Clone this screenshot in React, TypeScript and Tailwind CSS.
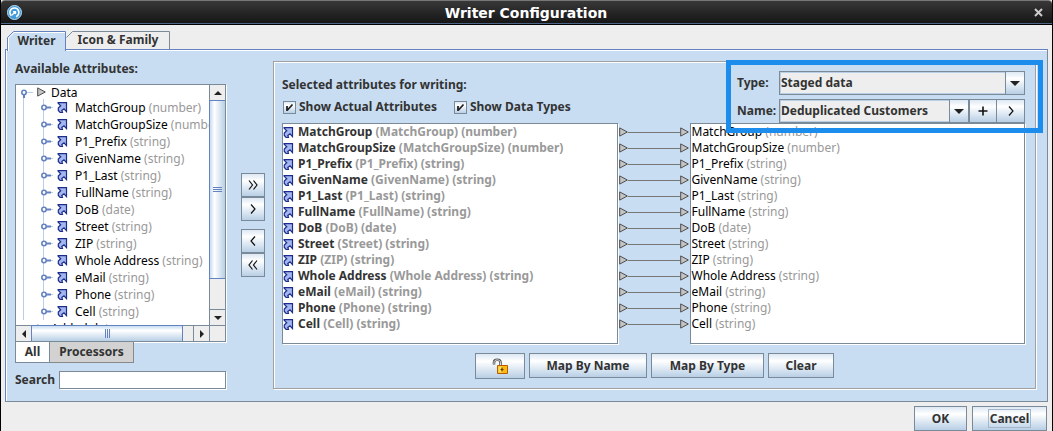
import React from 'react';

const attributes = [
  { name: 'MatchGroup', type: 'number' },
  { name: 'MatchGroupSize', type: 'number' },
  { name: 'P1_Prefix', type: 'string' },
  { name: 'GivenName', type: 'string' },
  { name: 'P1_Last', type: 'string' },
  { name: 'FullName', type: 'string' },
  { name: 'DoB', type: 'date' },
  { name: 'Street', type: 'string' },
  { name: 'ZIP', type: 'string' },
  { name: 'Whole Address', type: 'string' },
  { name: 'eMail', type: 'string' },
  { name: 'Phone', type: 'string' },
  { name: 'Cell', type: 'string' },
];

const metal = 'border border-[#7a8a99] bg-linear-to-b from-[#dde8f3] via-white via-30% to-[#b8cfe5]';

const AttributeIcon = () => (
  <svg width="11" height="11" viewBox="0 0 11 11" className="shrink-0">
    <path d="M1 .5h8.500v8.500L7 6.800 4.800 8.500l.7 2H3.200L1.300 8.500V6l2.400-2.200z" fill="#a3b6f0" />
    <path
      d="M.5 .6H9.500v9L7 6.800 4.800 8.500l.7 2H3.200L1.300 8.500V6l2.400-2.200L.8 .8"
      fill="none"
      stroke="#1c2c8c"
      strokeWidth="1.200"
    />
  </svg>
);

const NodeArrow = () => (
  <svg width="9" height="10" viewBox="0 0 9 10" className="shrink-0">
    <path d="M.7 .9v8.200L8.300 5z" fill="#c4c4c4" stroke="#4c4c4c" />
  </svg>
);

const Chevron = ({ double = false, left = false }: { double?: boolean; left?: boolean }) => (
  <svg width="12" height="12" viewBox="0 0 12 12" className={left ? 'rotate-180' : ''}>
    <path
      d={double ? 'M2 1.500 5.500 6 2 10.500M6.500 1.500 10 6 6.500 10.500' : 'M4 1.500 8 6 4 10.500'}
      fill="none"
      stroke="#111"
      strokeWidth="1.200"
    />
  </svg>
);

const Triangle = ({ d }: { d: string }) => (
  <svg width="10" height="10" viewBox="0 0 10 10">
    <path d={d} fill="#222" />
  </svg>
);

const AppLogo = () => (
  <svg width="15" height="15" viewBox="0 0 15 15">
    <circle cx="7.500" cy="7.500" r="7" fill="#3f9bdc" stroke="#b9dcf4" />
    <path d="M4.300 10.800A4.500 4.500 0 1 1 9 11.700" fill="none" stroke="#fff" strokeWidth="1.600" />
    <path d="M4.800 10.200 8 7M6 6.600h2.500V9" fill="none" stroke="#fff" strokeWidth="1.300" />
  </svg>
);

const LockIcon = () => (
  <svg width="17" height="17" viewBox="0 0 17 17">
    <path d="M2 6.500V4.500C2 .8 8.500 .8 8.500 4.500V7" fill="none" stroke="#555" strokeWidth="2.600" />
    <path d="M2 6V4.500C2 1 8.500 1 8.500 4.500V7" fill="none" stroke="#ddd" strokeWidth="1" />
    <path d="M5.500 7.500h10v8h-10z" fill="#fdb913" stroke="#b85c00" />
    <path d="M6.500 8.500h4v6h-4z" fill="#ffe05a" />
    <path d="M10 9.500v4M8.500 11.500h3" stroke="#6b3500" strokeWidth="1.200" />
  </svg>
);

const TitleBar = () => (
  <header className="h-[25px] flex items-center pl-[6px] pr-[6px] border-t border-[#777] border-b border-b-black bg-linear-to-b from-[#383838] to-[#151515] shadow-[inset_0_-1px_0_#4d6687] rounded-t-sm">
    <AppLogo />
    <h1 className="flex-1 text-center text-white text-[14px] leading-4 font-bold font-[family-name:'DejaVu_Sans',sans-serif]">
      Writer Configuration
    </h1>
    <button aria-label="Close" className="size-4 flex items-center justify-center">
      <svg width="9" height="9" viewBox="0 0 9 9">
        <path d="M1 1l7 7M8 1 1 8" stroke="#ccc" strokeWidth="2" />
      </svg>
    </button>
  </header>
);

const WindowTabs = () => (
  <nav className="flex pl-[2px] h-[19px] relative z-10">
    <button className="w-[59px] h-[19px] text-center relative">
      <svg className="absolute left-0 top-0" width="59" height="20" viewBox="0 0 59 20">
        <path d="M.5 20V6.500l6-6h52V20" fill="#c8ddf2" stroke="#6382bf" />
        <path d="M1.500 20V7L7 1.500h51" fill="none" stroke="#fff" />
      </svg>
      <span className="relative">Writer</span>
    </button>
    <button className="w-[104px] h-[18px] text-center relative">
      <svg className="absolute left-0 top-0" width="104" height="18" viewBox="0 0 104 18">
        <path d="M.5 6.500l6-6h97V18" fill="none" stroke="#7a8a99" />
      </svg>
      <span className="relative">Icon &amp; Family</span>
    </button>
  </nav>
);

const AttributeTree = () => (
  <div className="flex-1 basis-0 min-h-0 flex flex-col border border-[#7a8a99] bg-white shadow-[1px_1px_0_#fff]">
    <div className="flex-1 min-h-0 flex">
      <ul className="flex-1 min-w-0 overflow-hidden font-normal text-black whitespace-nowrap">
        <li className="flex items-center h-[14px]">
          <svg width="21" height="14" viewBox="0 0 21 14" className="shrink-0">
            <path d="M7.500 10v4" stroke="#b8cfe5" />
            <path d="M8 7.500h9" stroke="#b8cfe5" />
            <path d="M8 9v4" stroke="#6382bf" strokeWidth="2" />
            <circle cx="8" cy="7.500" r="2.200" fill="#fff" stroke="#6382bf" strokeWidth="1.600" />
          </svg>
          <NodeArrow />
          <span className="pl-[5px] pt-[2px]">Data</span>
        </li>
        {attributes.map((a) => (
          <li key={a.name} className="flex items-center h-[17px]">
            <svg width="41" height="17" viewBox="0 0 41 17" className="shrink-0">
              <path d="M7.500 0v17M27.500 0v17M30 8.500h7" stroke="#b8cfe5" />
              <path d="M30 8.500h5" stroke="#6382bf" strokeWidth="2" />
              <circle cx="28" cy="8.500" r="2.200" fill="#fff" stroke="#6382bf" strokeWidth="1.600" />
            </svg>
            <AttributeIcon />
            <span className="pl-[7px]">
              {a.name} <span className="text-[#999]">({a.type})</span>
            </span>
          </li>
        ))}
        <li className="flex items-center h-[18px] pl-[21px]">
          <NodeArrow />
          <span className="pl-[5px]">Added data</span>
        </li>
      </ul>
      <div className="w-4 flex flex-col border-l border-[#7a8a99] bg-[#eee]">
        <button aria-label="Scroll up" className="h-[15px] flex items-center justify-center">
          <Triangle d="M1 7h8L5 3z" />
        </button>
        <div className="h-[179px] flex flex-col items-center justify-center gap-px border-y border-l border-[#6382bf] -ml-px bg-linear-to-r from-[#c8ddf2] via-white via-30% to-[#b8cfe5]">
          <i className="w-[9px] h-px bg-[#6382bf]" />
          <i className="w-[9px] h-px bg-[#6382bf]" />
          <i className="w-[9px] h-px bg-[#6382bf]" />
        </div>
        <div className="flex-1" />
        <button aria-label="Scroll down" className="h-4 flex items-center justify-center border-t border-[#7a8a99]">
          <Triangle d="M1 3h8L5 7z" />
        </button>
      </div>
    </div>
    <div className="h-4 flex border-t border-[#7a8a99] bg-[#eee]">
      <button aria-label="Scroll left" className="w-[15px] flex items-center justify-center">
        <Triangle d="M7 1v8L3 5z" />
      </button>
      <div className="w-[152px] flex items-center justify-center gap-px border-x border-t border-[#6382bf] -mt-px bg-linear-to-b from-[#c8ddf2] via-white via-30% to-[#b8cfe5]">
        <i className="h-[9px] w-px bg-[#6382bf]" />
        <i className="h-[9px] w-px bg-[#6382bf]" />
        <i className="h-[9px] w-px bg-[#6382bf]" />
      </div>
      <div className="flex-1" />
      <button aria-label="Scroll right" className="w-4 flex items-center justify-center border-l border-[#7a8a99]">
        <Triangle d="M3 1v8l4-4z" />
      </button>
      <div className="w-4 border-l border-[#7a8a99]" />
    </div>
  </div>
);

const Available = () => (
  <section className="w-[211px] shrink-0 flex flex-col">
    <h2 className="pt-[11px] pb-[7px]">Available Attributes:</h2>
    <AttributeTree />
    <div className="flex">
      <button className="w-[35px] h-[21px] bg-white border border-t-0 border-[#7a8a99]">All</button>
      <button className="w-[84px] h-[21px] bg-[#d2d2d2] border border-t-0 border-l-0 border-[#888]">Processors</button>
    </div>
    <div className="flex items-center gap-1 pt-2">
      <label htmlFor="search">Search</label>
      <input
        id="search"
        className="flex-1 min-w-0 h-[18px] px-1 bg-white border border-[#7a8a99] shadow-[1px_1px_0_#fff] outline-none font-normal"
      />
    </div>
  </section>
);

const MoveButtons = () => (
  <div className="w-6 shrink-0 flex flex-col ml-[15px] mr-2 pt-[123px]">
    <button aria-label="Add all" className={`h-6 flex items-center justify-center ${metal}`}><Chevron double /></button>
    <button aria-label="Add" className={`h-6 flex items-center justify-center ${metal}`}><Chevron /></button>
    <button aria-label="Remove" className={`h-6 mt-2 flex items-center justify-center ${metal}`}><Chevron left /></button>
    <button aria-label="Remove all" className={`h-6 flex items-center justify-center ${metal}`}><Chevron double left /></button>
  </div>
);

const Combo = ({ id, value }: { id: string; value: string }) => (
  <div className="relative flex-1 min-w-0 h-6">
    <select
      id={id}
      className="appearance-none w-full h-6 pl-px bg-[#eee] border border-[#7a8a99] shadow-[inset_0_0_0_1px_#b8cfe5] outline-none"
    >
      <option>{value}</option>
    </select>
    <span className={`absolute right-0 top-0 w-5 h-6 flex items-center justify-center pointer-events-none ${metal}`}>
      <Triangle d="M0 3h10L5 8z" />
    </span>
  </div>
);

const TargetForm = () => (
  <div className="relative w-[288px] flex flex-col gap-1">
    <div className="flex items-center">
      <label htmlFor="type" className="w-[42px]">Type:</label>
      <Combo id="type" value="Staged data" />
    </div>
    <div className="flex items-center">
      <label htmlFor="name" className="w-[42px]">Name:</label>
      <Combo id="name" value="Deduplicated Customers" />
      <button aria-label="New" className={`w-7 h-6 flex items-center justify-center ${metal}`}>
        <svg width="10" height="10" viewBox="0 0 10 10">
          <path d="M5 .5v9M.5 5h9" stroke="#111" strokeWidth="1.600" />
        </svg>
      </button>
      <button aria-label="Open" className={`w-7 h-6 flex items-center justify-center border-l-0 ${metal}`}>
        <Chevron />
      </button>
    </div>
    <div className="absolute -left-[11px] -right-[18px] -top-[11px] -bottom-[10px] border-[5px] border-[#1c8ced] pointer-events-none z-10" />
  </div>
);

const CheckOption = ({ label }: { label: string }) => (
  <label className="flex items-center gap-[3px]">
    <span className="relative size-[13px]">
      <input type="checkbox" defaultChecked className={`appearance-none block size-[13px] ${metal}`} />
      <svg width="13" height="13" viewBox="0 0 13 13" className="absolute left-0 top-0 pointer-events-none">
        <path d="M4 5v5M4.500 9 9.500 3.500" fill="none" stroke="#222" strokeWidth="1.800" />
      </svg>
    </span>
    {label}
  </label>
);

const Mapping = () => (
  <div className="flex h-[221px]">
    <ul className="flex-1 min-w-0 overflow-hidden bg-white border border-[#7a8a99] shadow-[1px_1px_0_#fff] whitespace-nowrap">
      {attributes.map((a) => (
        <li key={a.name} className="h-4 flex items-center">
          <AttributeIcon />
          <span className="pl-1">
            {a.name} <span className="text-[#999]">({a.name}) ({a.type})</span>
          </span>
        </li>
      ))}
    </ul>
    <div className="w-[72px] shrink-0 pt-px pl-px pr-px">
      {attributes.map((a) => (
        <div key={a.name} className="h-4 flex items-center">
          <NodeArrow />
          <div className="flex-1 h-px bg-[#777]" />
          <NodeArrow />
        </div>
      ))}
    </div>
    <ul className="flex-1 min-w-0 overflow-hidden bg-white border border-[#7a8a99] shadow-[1px_1px_0_#fff] font-normal text-black whitespace-nowrap">
      {attributes.map((a) => (
        <li key={a.name} className="h-4 pl-px">
          {a.name} <span className="text-[#999]">({a.type})</span>
        </li>
      ))}
    </ul>
  </div>
);

const Selected = () => (
  <section className="flex-1 min-w-0 mt-[11px] pl-2 pr-[10px] border border-[#a0a0a0] shadow-[1px_1px_0_#fff,inset_1px_1px_0_#fff]">
    <div className="flex justify-between pt-[9px]">
      <div className="pt-[6px]">
        <h2>Selected attributes for writing:</h2>
        <div className="flex gap-[17px] pt-[6px] pl-px">
          <CheckOption label="Show Actual Attributes" />
          <CheckOption label="Show Data Types" />
        </div>
      </div>
      <TargetForm />
    </div>
    <Mapping />
    <div className="flex justify-center gap-1 py-[9px] pl-[2px]">
      <button aria-label="Unlock" className={`w-[50px] h-[26px] flex items-center justify-center ${metal}`}><LockIcon /></button>
      <button className={`w-[118px] h-[25px] ${metal}`}>Map By Name</button>
      <button className={`w-[113px] h-[25px] ${metal}`}>Map By Type</button>
      <button className={`w-[66px] h-[25px] ${metal}`}>Clear</button>
    </div>
  </section>
);

const App = () => {
  return (
    <div className="bg-[#eee] border-x border-black text-[#333] text-[12px] leading-4 font-bold font-[family-name:'Noto_Sans',sans-serif]">
      <TitleBar />
      <main className="pt-[6px] px-1">
        <WindowTabs />
        <div className="flex pl-[9px] pr-[11px] pb-3 border border-[#7a8a99] border-t-[#6382bf] border-l-[#6382bf] bg-[#c8ddf2] shadow-[inset_1px_1px_0_#fff] -mt-px">
          <Available />
          <MoveButtons />
          <Selected />
        </div>
        <footer className="flex justify-end gap-[5px] pt-[4px] pr-px">
          <button className={`w-[53px] h-[25px] ${metal}`}>OK</button>
          <button className={`w-[75px] h-[25px] ${metal}`}>
            <span className="border border-[#a3b8cc] px-px">Cancel</span>
          </button>
        </footer>
      </main>
    </div>
  );
};

export default App;
